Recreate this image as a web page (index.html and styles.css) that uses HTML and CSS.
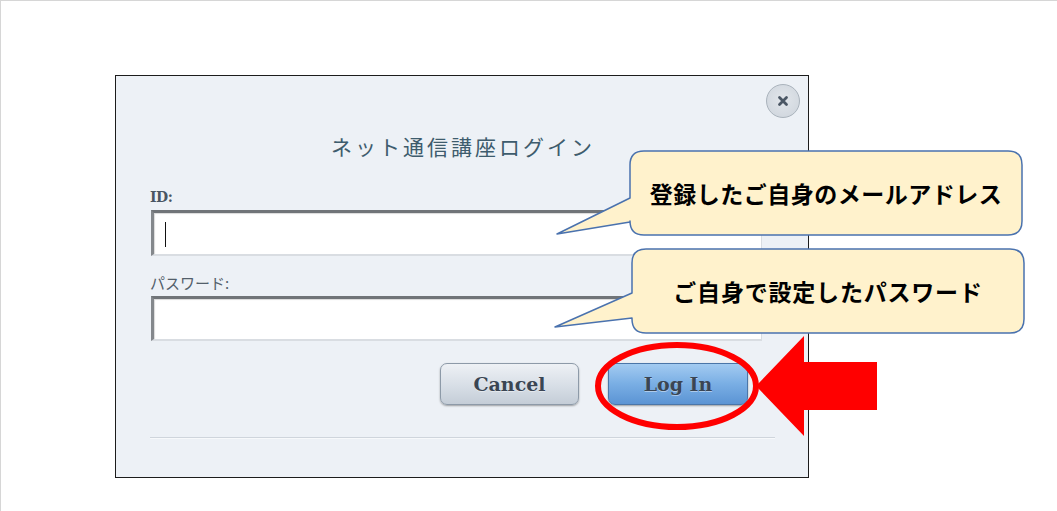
FILE: index.html
```html
<!DOCTYPE html>
<html lang="ja">
<head>
<meta charset="utf-8">
<title>ネット通信講座ログイン</title>
<link rel="stylesheet" href="styles.css">
</head>
<body>
<div class="page">
  <div class="dialog">
    <button class="close" aria-label="close">
      <svg width="12" height="12" viewBox="0 0 12 12"><path d="M2.5 2.5 L9.5 9.5 M9.5 2.5 L2.5 9.5" stroke="#4b5765" stroke-width="2.8" stroke-linecap="round" fill="none"/></svg>
    </button>
    <div class="title">ネット通信講座ログイン</div>
    <div class="label label-id">ID:</div>
    <div class="field field-id"><span class="caret"></span></div>
    <div class="label label-pw">パスワード:</div>
    <div class="field field-pw"></div>
    <div class="actions">
      <button class="btn btn-cancel">Cancel</button>
      <button class="btn btn-login">Log In</button>
    </div>
    <div class="sep"></div>
  </div>

  <svg class="overlay" width="1057" height="511" viewBox="0 0 1057 511">
    <path class="callout" d="M644 151 H1008 Q1022 151 1022 165 V221 Q1022 235 1008 235 H644 Q630 235 630 221 V222 L557 234 L630 198 V165 Q630 151 644 151 Z"/>
    <path class="callout" d="M646 249 H1010 Q1024 249 1024 263 V319 Q1024 333 1010 333 H646 Q632 333 632 319 V318 L555 327 L632 293 V263 Q632 249 646 249 Z"/>
    <ellipse cx="677" cy="386" rx="79" ry="41" fill="none" stroke="#ff0000" stroke-width="6"/>
    <polygon points="756,386 804,336 804,362 877,362 877,410 804,410 804,436" fill="#ff0000"/>
  </svg>
  <div class="note note-1">登録したご自身のメールアドレス</div>
  <div class="note note-2">ご自身で設定したパスワード</div>
</div>
</body>
</html>
```

FILE: styles.css
```css
* { box-sizing: border-box; }
html, body { margin: 0; padding: 0; background: #ffffff; }
body { width: 1057px; height: 511px; overflow: hidden; }

.page {
  position: relative;
  width: 1057px;
  height: 511px;
  border-top: 1px solid #d6d6d6;
  border-left: 1px solid #d6d6d6;
  padding: 74px 0 0 114px;
}

.dialog {
  position: relative;
  width: 694px;
  height: 403px;
  border: 1px solid #1c1c1c;
  background: #edf1f6;
  padding: 55px 32px 0 34px;
}

.close {
  position: absolute;
  top: 8px;
  right: 8px;
  width: 34px;
  height: 34px;
  border-radius: 50%;
  border: 1px solid #aab3bc;
  background: radial-gradient(circle at 50% 45%, #e2e6eb 0%, #d3d9e0 70%, #c6cdd5 100%);
  padding: 0;
  display: flex;
  align-items: center;
  justify-content: center;
}

.title {
  font-family: "Noto Sans CJK JP", sans-serif;
  font-size: 21px;
  line-height: 30px;
  letter-spacing: 3px;
  color: #3e5c6d;
  text-align: center;
  font-weight: 400;
}

.label {
  height: 16px;
  line-height: 16px;
}
.label-id {
  margin-top: 28px;
  font-family: "DejaVu Serif", serif;
  font-weight: 700;
  font-size: 14px;
  letter-spacing: -0.5px;
  color: #4a5663;
}
.label-pw {
  margin-top: 19px;
  font-family: "Noto Sans CJK JP", sans-serif;
  font-size: 15px;
  color: #535f6b;
}

.field {
  margin-top: 5px;
  margin-left: 1px;
  width: 611px;
  background: #ffffff;
  border-top: 3px solid #707478;
  border-left: 3px solid #84888c;
  border-right: 1px solid #d9dde2;
  border-bottom: 2px solid #d9dde2;
  box-shadow: inset 1px 1px 1px rgba(0,0,0,0.15);
  display: flex;
  align-items: center;
}
.field-id { height: 46px; padding-left: 11px; }
.field-pw { height: 45px; }

.caret {
  display: block;
  width: 1px;
  height: 25px;
  margin-top: 2px;
  background: #111111;
}

.actions {
  margin-top: 22px;
  display: flex;
  justify-content: flex-end;
  gap: 29px;
  padding-right: 28px;
}

.btn {
  height: 42px;
  border-radius: 7px;
  font-family: "DejaVu Serif", serif;
  font-weight: 700;
  font-size: 19px;
  color: #3a4553;
  text-shadow: 0 1px 0 rgba(255,255,255,0.45);
  padding: 0;
  box-shadow: 0 1px 2px rgba(0,0,0,0.35);
}
.btn-cancel {
  width: 139px;
  border: 1px solid #8d9aa8;
  background: linear-gradient(#eef1f5, #d7dee6 55%, #c4cdd7);
}
.btn-login {
  width: 140px;
  border: 1px solid #4b76a8;
  background: linear-gradient(#a3cbf1, #79aee4 50%, #5b94d4);
}

.sep {
  margin-top: 32px;
  height: 1px;
  width: 625px;
  background: #cfd5dc;
  box-shadow: 0 1px 0 #f7f9fb;
}

.overlay {
  position: absolute;
  top: -1px;
  left: -1px;
  pointer-events: none;
}
.callout {
  fill: #fff2cc;
  stroke: #4a72ae;
  stroke-width: 1.5;
  stroke-linejoin: round;
}

.note {
  position: absolute;
  display: flex;
  align-items: center;
  justify-content: center;
  font-family: "Noto Sans CJK JP", sans-serif;
  font-weight: 700;
  font-size: 23px;
  letter-spacing: 0.5px;
  color: #000000;
  white-space: nowrap;
}
.note-1 { left: 629px; top: 150px; width: 392px; height: 84px; }
.note-2 { left: 631px; top: 248px; width: 392px; height: 84px; letter-spacing: 0.8px; }
```
